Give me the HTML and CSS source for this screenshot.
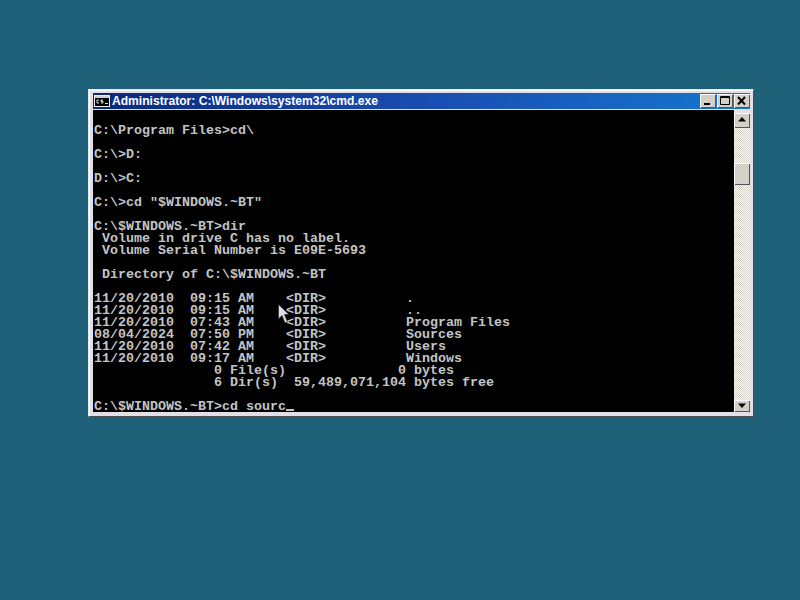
FILE: index.html
```html
<!DOCTYPE html>
<html lang="en">
<head>
<meta charset="utf-8">
<title>cmd.exe</title>
<link rel="stylesheet" href="styles.css">
</head>
<body>
<div class="window">
  <div class="titlebar">
    <svg class="appicon" width="16" height="12" viewBox="0 0 16 12"><rect x="0.5" y="0.5" width="15" height="11" fill="#d0d0d0" stroke="#eee"/><rect x="1" y="3" width="14" height="8" fill="#000"/><path d="M3 5H5M3 5V8H5M7 8H9V6.500H7V5H9M11 8.500H14" stroke="#ddd" fill="none"/></svg>
    <span class="title">Administrator: C:\Windows\system32\cmd.exe</span>
    <div class="buttons">
      <div class="btn"><svg width="16" height="14" viewBox="0 0 16 14"><rect x="4" y="9" width="6" height="2" fill="#000"/></svg></div>
      <div class="btn"><svg width="16" height="14" viewBox="0 0 16 14"><path d="M3.500 2.500H12.500V10.500H3.500ZM3.500 3.500H12.500" fill="none" stroke="#000"/></svg></div>
      <div class="btn"><svg width="16" height="14" viewBox="0 0 16 14"><path d="M4 3L11 10.500M11 3L4 10.500" fill="none" stroke="#000" stroke-width="2"/></svg></div>
    </div>
  </div>
  <div class="body">
<pre class="console">

C:\Program Files&gt;cd\

C:\&gt;D:

D:\&gt;C:

C:\&gt;cd "$WINDOWS.~BT"

C:\$WINDOWS.~BT&gt;dir
 Volume in drive C has no label.
 Volume Serial Number is E09E-5693

 Directory of C:\$WINDOWS.~BT

11/20/2010  09:15 AM    &lt;DIR&gt;          .
11/20/2010  09:15 AM    &lt;DIR&gt;          ..
11/20/2010  07:43 AM    &lt;DIR&gt;          Program Files
08/04/2024  07:50 PM    &lt;DIR&gt;          Sources
11/20/2010  07:42 AM    &lt;DIR&gt;          Users
11/20/2010  09:17 AM    &lt;DIR&gt;          Windows
               0 File(s)              0 bytes
               6 Dir(s)  59,489,071,104 bytes free

C:\$WINDOWS.~BT&gt;cd sourc<span class="caret"></span></pre>
    <div class="scrollbar">
      <div class="sb-btn"><svg width="16" height="15" viewBox="0 0 16 15"><path d="M8 4L12 8.500H4Z" fill="#000"/></svg></div>
      <div class="track">
        <div class="thumb"></div>
      </div>
      <div class="sb-btn sb-btn-down"><svg width="16" height="12" viewBox="0 0 16 12"><path d="M4 3.500H12L8 8Z" fill="#000"/></svg></div>
    </div>
  </div>
</div>
<svg class="pointer" width="14" height="22" viewBox="0 0 14 22"><path d="M0.500 0.500V15L4 11.500L7 19L9.500 18L6.500 10.500H11Z" fill="#e0e0e0" stroke="#222" stroke-width="0.700"/></svg>
</body>
</html>
```
FILE: styles.css
```css
html, body {
  margin: 0;
  height: 100%;
}
body {
  background: #1f6179;
  overflow: hidden;
  position: relative;
}
.window {
  position: absolute;
  left: 88px;
  top: 89px;
  width: 666px;
  height: 328px;
  box-sizing: border-box;
  padding: 3px 3px 4px 4px;
  background: #e2dfe6;
  border-top: 1px solid #e8e8e8;
  border-left: 1px solid #e8e8e8;
  border-right: 1px solid #505050;
  border-bottom: 1px solid #505050;
  display: flex;
  flex-direction: column;
  box-shadow: inset 1px 1px 0 #fff;
}
.titlebar {
  height: 16px;
  flex: none;
  display: flex;
  align-items: center;
  background: linear-gradient(90deg, #0a2a7a 0%, #1a4cb0 50%, #1478cc 100%);
  color: #fff;
}
.appicon {
  flex: none;
  margin: 0 2px 0 1px;
}
.title {
  font: bold 12.100px "Liberation Sans", sans-serif;
  white-space: nowrap;
  flex: 1;
}
.buttons {
  display: flex;
  gap: 1px;
}
.btn {
  width: 16px;
  height: 14px;
  background: #d4d0c8;
  box-shadow: inset 1px 1px 0 #fff, inset -1px -1px 0 #555;
  display: flex;
}
.body {
  flex: 1;
  display: flex;
  min-height: 0;
  margin-top: 1px;
}
.console {
  margin: 0;
  padding: 3px 0 0 1px;
  width: 640px;
  background: #000;
  color: #c4c4c4;
  font: bold 13.330px/12px "Liberation Mono", monospace;
}
.caret {
  display: inline-block;
  width: 8px;
  height: 2px;
  background: #c4c4c4;
  vertical-align: -1px;
}
.scrollbar {
  width: 16px;
  display: flex;
  flex-direction: column;
  padding-top: 3px;
}
.sb-btn {
  height: 15px;
  flex: none;
  background: #d4d0c8;
  box-shadow: inset 1px 1px 0 #fff, inset -1px -1px 0 #555;
  display: flex;
}
.sb-btn-down {
  height: 12px;
}
.track {
  flex: 1;
  background: conic-gradient(#fff 25%, #d4d0c8 0 50%, #fff 0 75%, #d4d0c8 0) 0 0 / 2px 2px;
  padding-top: 35px;
}
.thumb {
  height: 22px;
  background: #d4d0c8;
  box-shadow: inset 1px 1px 0 #fff, inset -1px -1px 0 #555;
}
.pointer {
  position: absolute;
  left: 278px;
  top: 304px;
}
```
